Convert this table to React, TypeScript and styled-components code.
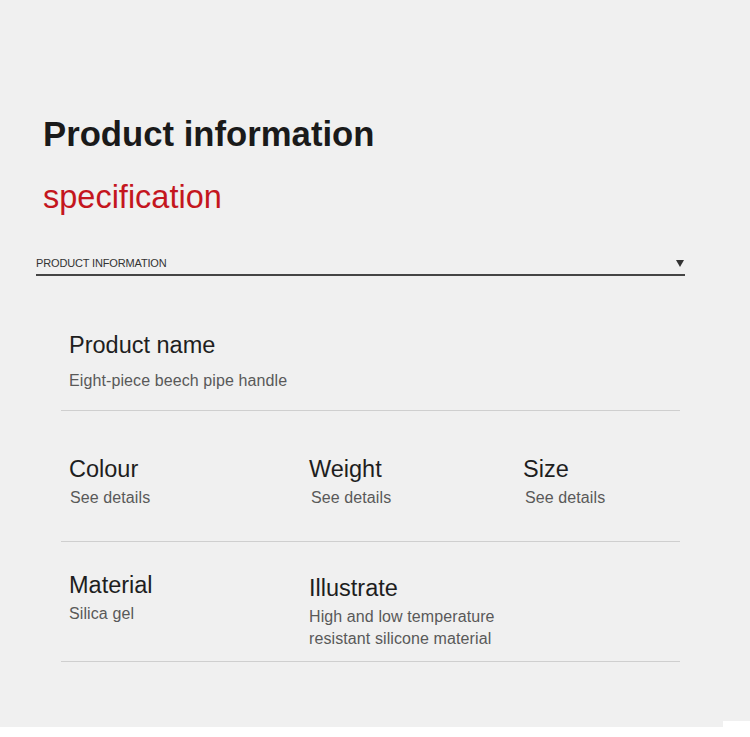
import styled, { createGlobalStyle } from 'styled-components';

const GlobalStyle = createGlobalStyle`
    body {
        margin: 0;
        background: #ffffff;
        font-family: "Liberation Sans", Arial, sans-serif;
    }
`;

const Page = styled.div`
    width: 750px;
    background: #f0f0f0;
    padding: 114px 0 59px;
    box-sizing: border-box;
`;

const BottomStrip = styled.div`
    width: 723px;
    height: 6px;
    background: #f0f0f0;
`;

const Title = styled.h1`
    margin: 0;
    padding-left: 43px;
    font-size: 34.7px;
    line-height: 40px;
    font-weight: 700;
    color: #1a1a1a;
`;

const Subtitle = styled.h2`
    margin: 24px 0 0;
    padding-left: 43px;
    font-size: 32.5px;
    line-height: 38px;
    font-weight: 400;
    color: #c4161e;
`;

const TabBar = styled.div`
    display: flex;
    align-items: center;
    justify-content: space-between;
    margin: 40px 0 0 36px;
    width: 649px;
    padding-bottom: 4px;
    border-bottom: 2px solid #454545;
`;

const TabLabel = styled.span`
    font-size: 11px;
    line-height: 14px;
    letter-spacing: -0.15px;
    color: #333;
    text-transform: uppercase;
`;

const Caret = styled.span`
    width: 0;
    height: 0;
    margin-right: 1px;
    border-left: 4px solid transparent;
    border-right: 4px solid transparent;
    border-top: 7px solid #333;
`;

const Specs = styled.div`
    margin: 55px 0 0 61px;
    width: 619px;
`;

const Row = styled.div<{ $top: number; $bottom: number }>`
    display: grid;
    grid-template-columns: 240px 214px 1fr;
    padding: ${p => p.$top}px 0 ${p => p.$bottom}px 8px;
    border-bottom: 1px solid #cfcfcf;
`;

const Cell = styled.div<{ $gap: number; $shift?: number; $wide?: boolean }>`
    display: flex;
    flex-direction: column;
    gap: ${p => p.$gap}px;
    padding-top: ${p => p.$shift || 0}px;
    grid-column: ${p => (p.$wide ? '1 / 3' : 'auto')};
`;

const Name = styled.div`
    font-size: 23.5px;
    line-height: 28px;
    color: #1e1e1e;
`;

const Value = styled.div<{ $indent?: number }>`
    padding-left: ${p => p.$indent || 0}px;
    font-size: 16px;
    line-height: 22px;
    letter-spacing: 0.1px;
    color: #595959;
`;

const App = () => {
    return (
        <>
            <GlobalStyle />
            <Page>
                <Title>Product information</Title>
                <Subtitle>specification</Subtitle>
                <TabBar>
                    <TabLabel>Product information</TabLabel>
                    <Caret />
                </TabBar>
                <Specs>
                    <Row $top={0} $bottom={18}>
                        <Cell $gap={11} $wide>
                            <Name>Product name</Name>
                            <Value>Eight-piece beech pipe handle</Value>
                        </Cell>
                    </Row>
                    <Row $top={44} $bottom={32}>
                        <Cell $gap={4}>
                            <Name>Colour</Name>
                            <Value $indent={1}>See details</Value>
                        </Cell>
                        <Cell $gap={4}>
                            <Name>Weight</Name>
                            <Value $indent={2}>See details</Value>
                        </Cell>
                        <Cell $gap={4}>
                            <Name>Size</Name>
                            <Value $indent={2}>See details</Value>
                        </Cell>
                    </Row>
                    <Row $top={29} $bottom={11}>
                        <Cell $gap={4}>
                            <Name>Material</Name>
                            <Value>Silica gel</Value>
                        </Cell>
                        <Cell $gap={4} $shift={3}>
                            <Name>Illustrate</Name>
                            <Value>
                                High and low temperature
                                <br />
                                resistant silicone material
                            </Value>
                        </Cell>
                    </Row>
                </Specs>
            </Page>
            <BottomStrip />
        </>
    );
};

export default App;
